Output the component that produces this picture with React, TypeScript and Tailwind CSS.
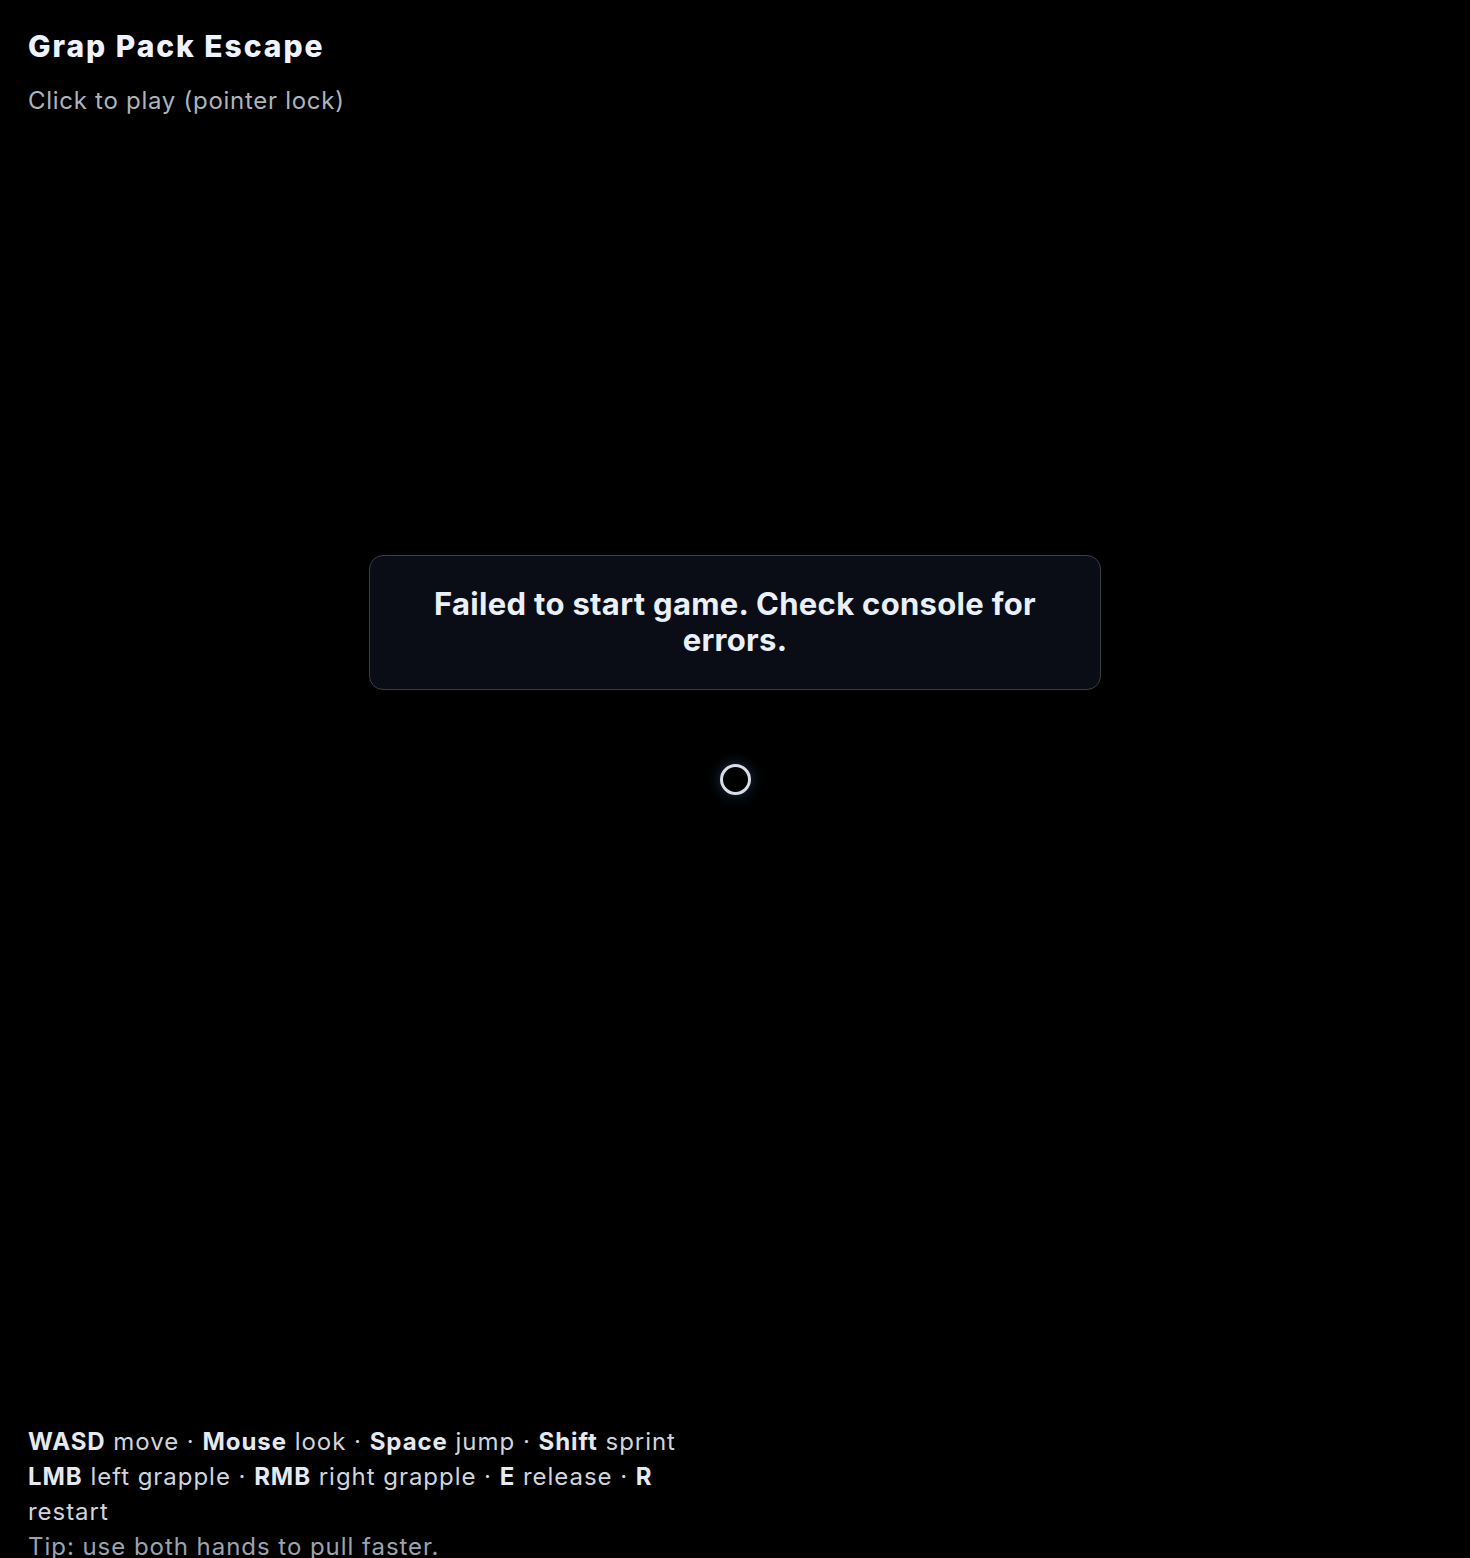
import React from 'react';

const controls: [string, string][] = [
  ['WASD', 'move'],
  ['Mouse', 'look'],
  ['Space', 'jump'],
  ['Shift', 'sprint'],
];

const grapple: [string, string][] = [
  ['LMB', 'left grapple'],
  ['RMB', 'right grapple'],
  ['E', 'release'],
  ['R', 'restart'],
];

// One line of key hints, keys in bold, separated by middots
const HintLine: React.FC<{ items: [string, string][] }> = ({ items }) => (
  <div>
    {items.map(([key, action], i) => (
      <React.Fragment key={key}>
        {i > 0 && ' · '}
        <b className="font-bold text-[#e5e9f0]">{key}</b> {action}
      </React.Fragment>
    ))}
  </div>
);

const App: React.FC = () => {
  return (
    <div
      className="relative h-[1558px] w-full overflow-hidden bg-black text-[#d1d5db]"
      style={{ fontFamily: 'Inter, "Noto Sans", sans-serif' }}
    >
      {/* Header */}
      <div className="absolute left-[28px] top-[28px]">
        <h1 className="text-[30px] font-extrabold leading-[36px] tracking-[0.065em] text-[#eef3ff]">Grap Pack Escape</h1>
        <p className="mt-[22px] text-[24px] leading-[30px] tracking-[0.03em] text-[#aeb4bd]">Click to play (pointer lock)</p>
      </div>

      {/* Error + crosshair overlay */}
      <div className="absolute inset-0 flex flex-col items-center justify-center pb-[208px]">
        <div className="w-[732px] rounded-[14px] border border-[#3a3d44] bg-[#0a0d15] px-[32px] pb-[31px] pt-[30px] text-center">
          <p className="text-[31px] font-bold leading-[36px] tracking-[0.01em] text-[#eaf0fa]">
            Failed to start game. Check console for errors.
          </p>
        </div>
        <div className="mt-[74px] h-[31px] w-[31px] rounded-full border-[3px] border-[#d8dee6] shadow-[0_0_14px_rgba(80,140,220,0.35)]" />
      </div>

      {/* Controls HUD */}
      <div className="absolute bottom-[-6px] left-[28px] w-[680px] text-[24px] leading-[35px] tracking-[0.04em]">
        <HintLine items={controls} />
        <HintLine items={grapple} />
        <div className="text-[#9ca3af]">Tip: use both hands to pull faster.</div>
      </div>
    </div>
  );
};

export default App;
